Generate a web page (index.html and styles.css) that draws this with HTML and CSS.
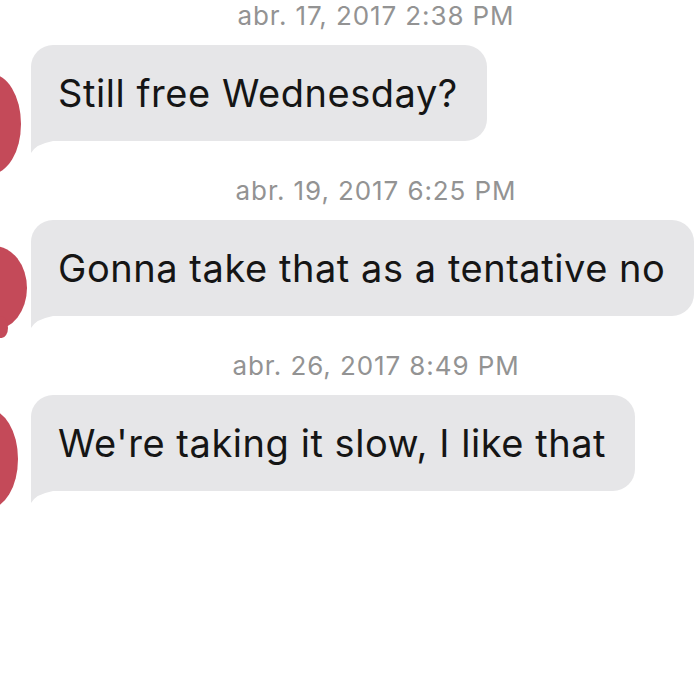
FILE: index.html
```html
<!DOCTYPE html>
<html lang="en">
<head>
<meta charset="utf-8">
<title>Messages</title>
<link rel="stylesheet" href="styles.css">
</head>
<body>
<main class="thread">
  <section class="group">
    <div class="stamp">abr. 17, 2017 2:38 PM</div>
    <div class="row">
      <div class="bubble">Still free Wednesday?</div>
    </div>
    <span class="avatar avatar-1"></span>
  </section>
  <section class="group">
    <div class="stamp">abr. 19, 2017 6:25 PM</div>
    <div class="row">
      <div class="bubble">Gonna take that as a tentative no</div>
    </div>
    <span class="avatar avatar-2"></span>
    <span class="avatar drip"></span>
  </section>
  <section class="group">
    <div class="stamp">abr. 26, 2017 8:49 PM</div>
    <div class="row">
      <div class="bubble">We're taking it slow, I like that</div>
    </div>
    <span class="avatar avatar-3"></span>
  </section>
</main>
</body>
</html>
```

FILE: styles.css
```css
html, body {
  margin: 0;
  padding: 0;
  background: #ffffff;
}

body {
  width: 700px;
  height: 700px;
  overflow: hidden;
  font-family: Inter, "Liberation Sans", Arial, sans-serif;
}

.thread {
  display: flex;
  flex-direction: column;
  gap: 35px;
  padding-top: 1px;
}

.group {
  position: relative;
  display: flex;
  flex-direction: column;
  gap: 14px;
}

.stamp {
  height: 30px;
  line-height: 30px;
  padding-left: 52px;
  text-align: center;
  font-size: 26px;
  letter-spacing: 0.9px;
  color: #939393;
  white-space: nowrap;
}

.row {
  display: flex;
  padding-left: 31px;
}

.bubble {
  position: relative;
  height: 96px;
  line-height: 96px;
  padding: 0 29px 0 27px;
  background: #e6e6e8;
  border-radius: 22px 22px 22px 0;
  color: #151515;
  font-size: 38px;
  letter-spacing: 0.55px;
  white-space: nowrap;
}

.bubble::after {
  content: "";
  position: absolute;
  left: 0;
  bottom: -12px;
  width: 22px;
  height: 12px;
  background: #e6e6e8;
  clip-path: path("M0 0 L0 12 Q5 3 22 0 Z");
}

.avatar {
  position: absolute;
  background: #c44a59;
  border-radius: 50%;
}

.avatar-1 {
  left: -39px;
  top: 73px;
  width: 60px;
  height: 100px;
}

.avatar-2 {
  left: -39px;
  top: 70px;
  width: 66px;
  height: 84px;
}

.drip {
  left: -6px;
  top: 140px;
  width: 14px;
  height: 22px;
  border-radius: 40% 60% 50% 50%;
}

.avatar-3 {
  left: -42px;
  top: 58px;
  width: 60px;
  height: 100px;
}
```
